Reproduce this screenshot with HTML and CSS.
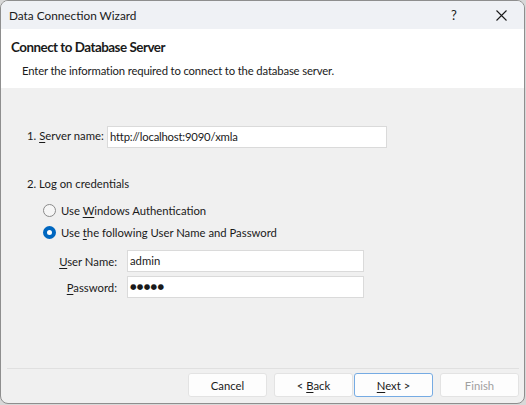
FILE: index.html
```html
<!DOCTYPE html>
<html>
<head>
<meta charset="utf-8">
<link rel="stylesheet" href="styles.css">
</head>
<body>
<div class="window">
  <div class="titlebar">
    <span class="title">Data Connection Wizard</span>
    <span class="help">?</span>
    <span class="close">
      <svg width="11" height="11" viewBox="0 0 11 11"><path d="M0.5 0.5 L10.5 10.5 M10.5 0.5 L0.5 10.5" stroke="#1a1a1a" stroke-width="1.1" fill="none"/></svg>
    </span>
  </div>
  <div class="header">
    <div class="header-title">Connect to Database Server</div>
    <div class="header-desc">Enter the information required to connect to the database server.</div>
  </div>
  <div class="content">
    <div class="server-row">
      <label class="server-label">1. <u>S</u>erver name:</label>
      <div class="input server-input">http://localhost:9090/xmla</div>
    </div>
    <div class="section">2. Log on credentials</div>
    <div class="radios">
      <div class="radio-row"><span class="radio"></span><span>Use <u>W</u>indows Authentication</span></div>
      <div class="radio-row"><span class="radio checked"></span><span>Use <u>t</u>he following User Name and Password</span></div>
    </div>
    <div class="creds">
      <label class="cred-label"><u>U</u>ser Name:</label>
      <div class="input cred-input">admin</div>
      <label class="cred-label"><u>P</u>assword:</label>
      <div class="input cred-input dots">●●●●●</div>
    </div>
  </div>
  <div class="footer">
    <div class="buttons">
      <button class="btn">Cancel</button>
      <button class="btn back">&lt; <u>B</u>ack</button>
      <button class="btn next"><u>N</u>ext &gt;</button>
      <button class="btn finish" disabled>Finish</button>
    </div>
  </div>
</div>
</body>
</html>
```
FILE: styles.css
```css
* { box-sizing: border-box; }
html, body { margin: 0; padding: 0; }
body {
  width: 526px;
  height: 405px;
  background: #d8d8d8;
  font-family: "Segoe UI", Lato, "Noto Sans", sans-serif;
  font-size: 11.3px;
  color: #1a1a1a;
}
u { text-decoration: underline; text-underline-offset: 2px; }
.window {
  width: 525px;
  height: 404px;
  border: 1px solid #8e8e8e;
  border-radius: 8px;
  overflow: hidden;
  background: #f0f0f0;
  display: flex;
  flex-direction: column;
}
.titlebar {
  height: 28px;
  flex: none;
  background: #eff1f5;
  display: flex;
  align-items: center;
  padding-left: 8px;
  font-size: 11.8px;
}
.title { flex: 1; }
.help { width: 14px; text-align: center; margin-right: 35px; font-size: 13px; }
.close { width: 11px; height: 11px; margin-right: 17px; display: flex; }
.header {
  height: 59px;
  flex: none;
  background: #ffffff;
  padding: 8px 0 0 10px;
}
.header-title { font-weight: bold; font-size: 13.4px; letter-spacing: -0.5px; line-height: 20px; }
.header-desc { margin-top: 6px; padding-left: 11px; line-height: 16px; letter-spacing: -0.15px; }
.content {
  flex: 1;
  padding: 38px 0 0 26px;
}
.server-row { display: flex; align-items: center; }
.server-label { width: 80px; line-height: 16px; margin-top: -2px; white-space: nowrap; }
.input {
  height: 22px;
  background: #ffffff;
  border: 1px solid #dadada;
  line-height: 20px;
  padding-left: 2px;
}
.server-input { width: 280px; letter-spacing: -0.2px; }
.section { margin-top: 28px; line-height: 16px; }
.radios { margin-top: 7px; padding-left: 16px; }
.radio-row { display: flex; align-items: center; height: 22px; }
.radio {
  width: 13px; height: 13px;
  border-radius: 50%;
  border: 1px solid #8a8a8a;
  background: #f6f6f6;
  margin-right: 5px;
  flex: none;
}
.radio.checked {
  border: 4px solid #0067c0;
  background: #ffffff;
}
.creds {
  margin-top: 7px;
  display: grid;
  grid-template-columns: 90px 237px;
  column-gap: 10px;
  row-gap: 4px;
  align-items: center;
}
.cred-label { text-align: right; white-space: nowrap; }
.dots { font-size: 7.5px; letter-spacing: 0.3px; font-family: "DejaVu Sans", sans-serif; }
.footer {
  flex: none;
  margin: 0 5px 0 6px;
  border-top: 1px solid #e0e0e0;
  padding: 4px 0 6px;
}
.buttons { display: flex; justify-content: flex-end; }
.btn {
  width: 79px;
  height: 24px;
  font-family: inherit;
  font-size: 11.3px;
  color: #1a1a1a;
  background: #fdfdfd;
  border: 1px solid #e3e3e3;
  border-radius: 3px;
  padding: 0;
}
.btn + .btn { margin-left: 7px; }
.btn.next { margin-left: 1px; border-color: #76abe3; }
.btn.finish { color: #a0a0a0; }
```
